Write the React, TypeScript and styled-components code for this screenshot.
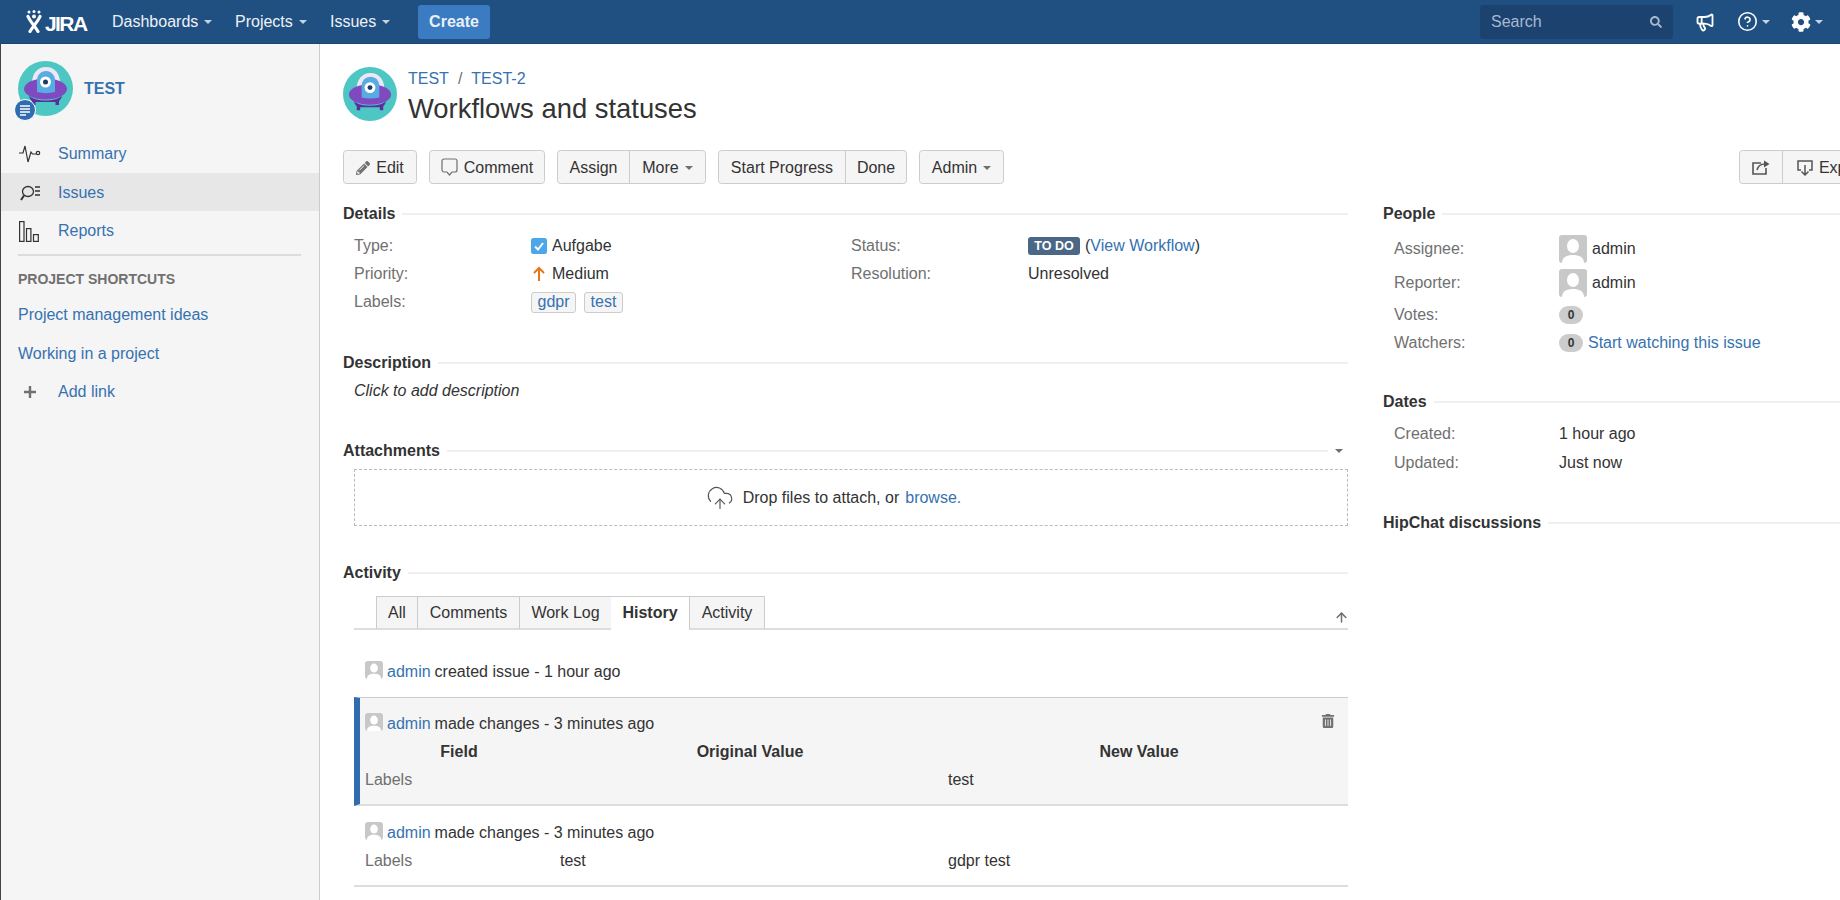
import React from "react";
import styled, { createGlobalStyle } from "styled-components";
import { FaPencilAlt, FaCog, FaSearch, FaTrashAlt } from "react-icons/fa";
import { Megaphone, CircleHelp, CloudUpload, ArrowUp } from "lucide-react";

const Global = createGlobalStyle`
  html, body { margin: 0; padding: 0; height: 100%; overflow: hidden; background: #fff; }
  body { font-family: "Liberation Sans", Arial, sans-serif; font-size: 16px; color: #333; }
  * { box-sizing: border-box; }
`;

const Page = styled.div`display: flex; flex-direction: column; height: 100vh; width: 1840px; overflow: hidden;`;
const TopBar = styled.header`
  flex: 0 0 44px; display: flex; align-items: center; background: #205081;
  border-bottom: 1px solid #1b4470; padding: 0 17px 0 26px; color: #fff;
`;
const LogoBox = styled.div`display: flex; align-items: center; width: 86px; height: 30px;`;
const LogoText = styled.span`font-size: 21px; font-weight: 700; letter-spacing: -1.6px; margin-left: 3px; color: #fff; line-height: 24px; padding-top: 4px;`;
const NavItem = styled.span<{ $w: number }>`
  display: flex; align-items: center; gap: 6px; width: ${p => p.$w}px; color: #eef2f7; font-size: 16px;
`;
const Caret = styled.i<{ $c?: string }>`
  display: inline-block; width: 0; height: 0; border-left: 4.5px solid transparent; border-right: 4.5px solid transparent;
  border-top: 4.5px solid ${p => p.$c || "#707070"}; flex: none;
`;
const EndCaret = styled(Caret)`margin-right: 5px;`;
const CreateBtn = styled.span`
  display: flex; align-items: center; justify-content: center; width: 72px; height: 34px; background: #3b7bc2;
  border-radius: 3px; color: #e8f0f8; font-weight: 700; font-size: 16px;
`;
const Spacer = styled.div`flex: 1;`;
const SearchBox = styled.div`
  width: 193px; height: 34px; background: #1c4270; border-radius: 3px; display: flex; align-items: center;
  justify-content: space-between; padding: 0 11px; color: #a6b9cf; font-size: 16px;
`;
const TopIcon = styled.span<{ $ml: number }>`display: flex; align-items: center; gap: 4px; margin-left: ${p => p.$ml}px; color: #fff;`;

const Body = styled.div`flex: 1; display: flex; min-height: 0;`;
const Side = styled.aside`
  flex: 0 0 320px; background: #f5f5f5; border-left: 1px solid #444; border-right: 1px solid #ccc; padding-top: 17px;
`;
const ProjectHead = styled.div`display: flex; align-items: center; height: 55px; margin: 0 0 18px 17px; gap: 11px; position: relative;`;
const ProjectName = styled.a`color: #3572b0; font-weight: 700; font-size: 16px;`;
const Badge = styled.span`
  position: absolute; left: -4px; bottom: -5px; width: 22px; height: 22px; border-radius: 50%; background: #2f6db0;
  border: 1.5px solid #fff; display: flex; align-items: center; justify-content: center;
`;
const SideRow = styled.div<{ $active?: boolean }>`
  height: 38.7px; display: flex; align-items: center; background: ${p => (p.$active ? "#e7e7e7" : "transparent")};
  color: #3572b0; padding: 1px 0 0 17px;
`;
const SideIcon = styled.span<{ $pl: number }>`width: 40px; padding-left: ${p => p.$pl}px; display: flex; align-items: center; color: #333;`;
const Divider = styled.div`height: 2px; background: #dcdcdc; margin: 4px 18px 9px 17px;`;
const ShortcutsTitle = styled.div`height: 28px; line-height: 28px; padding-left: 17px; margin-bottom: 2px; font-size: 14px; font-weight: 700; color: #707070;`;

const Main = styled.main`flex: 1; min-width: 0; padding: 23px 0 0 23px; overflow: hidden;`;
const IssueHead = styled.div`display: flex; height: 62px; gap: 11px;`;
const HeadText = styled.div`display: flex; flex-direction: column;`;
const Crumbs = styled.div`height: 22px; line-height: 24px; color: #3572b0; display: flex; gap: 9px;`;
const CrumbSep = styled.span`color: #707070;`;
const Title = styled.h1`margin: 0; font-size: 27.4px; font-weight: 400; line-height: 40px; color: #333;`;

const Toolbar = styled.div`display: flex; gap: 12px; width: 1537px; height: 34px; margin-top: 21px;`;
const Group = styled.div<{ $right?: boolean }>`
  display: flex; height: 34px; border: 1px solid #ccc; border-radius: 3.5px; background: #f5f5f5;
  margin-left: ${p => (p.$right ? "auto" : "0")};
`;
const Btn = styled.span<{ $w: number }>`
  width: ${p => p.$w}px; display: flex; align-items: center; justify-content: center; gap: 6px; color: #333; padding-top: 1px;
  & + & { border-left: 1px solid #ccc; }
`;

const Columns = styled.div`display: flex; gap: 35px;`;
const LeftCol = styled.div`flex: 0 0 1005px;`;
const RightCol = styled.div`flex: 1; min-width: 0;`;
const Heading = styled.div<{ $mt: number }>`
  display: flex; align-items: center; gap: 7px; height: 24px; margin-top: ${p => p.$mt}px;
  font-weight: 700; color: #333; padding-top: 1px;
`;
const HeadLine = styled.span`flex: 1; height: 2px; background: #efefef; margin-top: 1px;`;

const DetailsGrid = styled.div`display: grid; grid-template-columns: 177px 320px 177px 1fr; grid-auto-rows: 28px; margin: 7px 0 0 11px; align-items: center;`;
const Label = styled.span`color: #707070;`;
const Value = styled.span`display: flex; align-items: center; color: #333; gap: 5px;`;
const TagBox = styled.a`
  display: inline-flex; align-items: center; height: 21px; padding: 0 5.5px; margin-right: 3px; border: 1px solid #ccc;
  border-radius: 3px; background: #f5f5f5; color: #3572b0;
`;
const Lozenge = styled.span`
  display: inline-flex; align-items: center; justify-content: center; width: 52px; height: 18px; border-radius: 3px;
  background: #4a6785; color: #fff; font-size: 12.5px; font-weight: 700;
`;
const Link = styled.a`color: #3572b0;`;
const Italic = styled.div`height: 28px; line-height: 28px; margin: 3px 0 0 11px; font-style: italic; color: #333;`;
const DropZone = styled.div`
  height: 57px; margin: 7px 0 0 11px; border: 1px dashed #bbb; display: flex; align-items: center; justify-content: center;
  padding: 1px 35px 0 0; gap: 6px; color: #333;
`;
const CloudWrap = styled.span`display: flex; margin-right: 3px;`;
const Tabs = styled.div`
  display: flex; height: 34px; margin: 12px 0 0 11px; padding-left: 22px; border-bottom: 2px solid #ddd; position: relative;
`;
const Tab = styled.span<{ $active?: boolean; $w: number }>`
  width: ${p => p.$w}px; height: 34px; display: flex; align-items: center; justify-content: center;
  background: ${p => (p.$active ? "#fff" : "#f5f5f5")}; font-weight: ${p => (p.$active ? 700 : 400)};
  border: 1px solid #ccc; border-left-width: ${p => (p.$active ? 0 : 1)}px; border-bottom: ${p => (p.$active ? "2px solid #fff" : "2px solid #ddd")};
  & + & { margin-left: -1px; }
  color: #333;
`;
const TabArrow = styled.span`position: absolute; right: -1px; bottom: 3px; color: #707070; display: flex;`;

const Entries = styled.div`margin-left: 11px;`;
const Entry = styled.div<{ $hl?: boolean; $pt: number; $h: number }>`
  position: relative; height: ${p => p.$h}px; padding: ${p => p.$pt}px 0 0 ${p => (p.$hl ? 5 : 11)}px;
  background: ${p => (p.$hl ? "#f5f5f5" : "#fff")};
  border-top: ${p => (p.$hl ? "1px solid #ccc" : "none")};
  border-left: ${p => (p.$hl ? "6px solid #2f6db0" : "none")};
  border-bottom: ${p => (p.$hl ? "2px solid #ddd" : "none")};
`;
const EntryLine = styled.div`display: flex; align-items: center; height: 24px; gap: 4px; color: #333; padding-top: 1px;`;
const ChangeHead = styled.div`display: grid; grid-template-columns: 188px 394px 384px; height: 28px; align-items: center; text-align: center; font-weight: 700; margin-top: 2px; padding-top: 1px;`;
const ChangeRow = styled.div<{ $mt: number }>`display: grid; grid-template-columns: 195px 388px 1fr; height: 28px; align-items: center; margin-top: ${p => p.$mt}px; padding-top: 1px;`;
const Trash = styled.span`position: absolute; right: 13px; top: 16px; color: #707070; display: flex;`;
const EndLine = styled.div`height: 2px; background: #ddd; margin-top: 11px;`;

const PeopleRow = styled.div<{ $h: number }>`display: grid; grid-template-columns: 165px 1fr; height: ${p => p.$h}px; align-items: center; margin-left: 11px; padding-top: 1px;`;
const PeopleBlock = styled.div`margin-top: 6px;`;
const Count = styled.span`
  display: inline-flex; align-items: center; justify-content: center; width: 24px; height: 18px; border-radius: 9px;
  background: #ccc; color: #333; font-size: 12px; font-weight: 700;
`;
const AvatarBox = styled.span<{ $s: number; $lift: number }>`
  width: ${p => p.$s}px; height: ${p => p.$s}px; border-radius: 3px; background: #c8c8c8; overflow: hidden; display: inline-flex; flex: none;
  margin-top: ${p => -p.$lift}px;
`;

const Person = ({ s, lift = 0 }: { s: number; lift?: number }) => (
  <AvatarBox $s={s} $lift={lift}>
    <svg viewBox="0 0 28 28" width={s} height={s}>
      <ellipse cx="14" cy="11" rx="6" ry="7" fill="#fff" />
      <path d="M3 28c0-6 5-8 11-8s11 2 11 8z" fill="#fff" />
    </svg>
  </AvatarBox>
);

const Ufo = ({ s }: { s: number }) => (
  <svg viewBox="0 0 55 55" width={s} height={s}>
    <circle cx="27.5" cy="27.5" r="27.5" fill="#4cc7c4" />
    <path d="M14 22C14 12 20 6 28 6s14 6 14 16v10H14z" fill="#eee8f6" />
    <ellipse cx="27.5" cy="28" rx="21.500" ry="10.500" fill="#8049bf" />
    <path d="M11 35c5 3.500 10 4.500 16.500 4.500S39 38.500 44 35c-1 3-2 4-3 5v4h-3.500v-3h-20v3H14v-4c-1-1-2-2-3-5z" fill="#5b2d9e" />
    <path d="M19 31V19c0-5 4-9 9-9s9 4 9 9v12c-6 1.500-12 1.500-18 0z" fill="#57ade2" />
    <circle cx="27.5" cy="21" r="5.500" fill="#fff" />
    <circle cx="27.5" cy="21" r="2.500" fill="#1d3c6a" />
  </svg>
);

const LogoMark = () => (
  <svg viewBox="0 0 16 23" width="16" height="23" fill="none">
    <circle cx="3" cy="2" r="1.5" fill="#fff" />
    <circle cx="8" cy="1.5" r="1.5" fill="#fff" />
    <circle cx="13" cy="2" r="1.5" fill="#fff" />
    <path d="M2 6.5c2 5 5 7 10 15M14 6.5c-2 5-5 7-10 15" stroke="#fff" strokeWidth="3.2" strokeLinecap="round" />
    <circle cx="8" cy="6.5" r="2" fill="#fff" />
  </svg>
);

const Pulse = () => (
  <svg viewBox="0 0 22 20" width="22" height="20" fill="none" stroke="#333" strokeWidth="1.2">
    <path d="M0 9h4l2-7 3 16 3-10 1.500 2h4" />
    <circle cx="19" cy="9" r="1.700" />
  </svg>
);
const IssuesIcon = () => (
  <svg viewBox="0 0 21 16" width="21" height="16" fill="none" stroke="#333" strokeWidth="1.300">
    <ellipse cx="8" cy="6.500" rx="5.500" ry="5" />
    <path d="M4 10.500 1 15" strokeWidth="2" />
    <path d="M15 2h5M15 6h5M15 10h5" />
  </svg>
);
const BarsIcon = () => (
  <svg viewBox="0 0 20 21" width="20" height="21" fill="none" stroke="#333" strokeWidth="1.200">
    <rect x="0.600" y="0.600" width="4.400" height="19.800" />
    <rect x="7.500" y="7.600" width="4.400" height="12.800" />
    <rect x="14.500" y="13.600" width="4.800" height="6.800" />
  </svg>
);
const CommentIcon = () => (
  <svg viewBox="0 0 17 19" width="17" height="19" fill="none" stroke="#707070" strokeWidth="1.200">
    <path d="M3 1h11a2 2 0 0 1 2 2v9a2 2 0 0 1-2 2h-3l-2.500 3-2.500-3H3a2 2 0 0 1-2-2V3a2 2 0 0 1 2-2z" />
  </svg>
);
const ShareIcon = () => (
  <svg viewBox="0 0 18 15" width="18" height="15" fill="none" stroke="#555" strokeWidth="1.600">
    <path d="M9 3H1v11h13V8" />
    <path d="M5 10c1-4 4-6 8-6" />
    <path d="M12 0.500 17.500 4 12 7.500z" fill="#555" stroke="none" />
  </svg>
);
const ExportIcon = () => (
  <svg viewBox="0 0 16 16" width="16" height="16" fill="none" stroke="#555" strokeWidth="1.500">
    <path d="M4 10H1V1h14v9h-3" />
    <path d="M8 5v10M4.500 11.500 8 15l3.500-3.500" />
  </svg>
);
const CheckTile = () => (
  <svg viewBox="0 0 16 16" width="16" height="16">
    <rect width="16" height="16" rx="2.500" fill="#4ba6ea" />
    <path d="M4 8.500 7 11.500 12 5" fill="none" stroke="#fff" strokeWidth="2" />
  </svg>
);
const OrangeUp = () => (
  <svg viewBox="0 0 16 16" width="16" height="16" fill="none" stroke="#e8751a" strokeWidth="2">
    <path d="M8 15V2M3 7l5-5 5 5" />
  </svg>
);
const Lines = () => (
  <svg viewBox="0 0 12 12" width="12" height="12" stroke="#fff" strokeWidth="1.300">
    <path d="M1 2h10M1 5h10M1 8h10M1 11h6" />
  </svg>
);

export default function App() {
  return (
    <Page>
      <Global />
      <TopBar>
        <LogoBox><LogoMark /><LogoText>JIRA</LogoText></LogoBox>
        <NavItem $w={123}>Dashboards <Caret $c="#c5d2e2" /></NavItem>
        <NavItem $w={95}>Projects <Caret $c="#c5d2e2" /></NavItem>
        <NavItem $w={88}>Issues <Caret $c="#c5d2e2" /></NavItem>
        <CreateBtn>Create</CreateBtn>
        <Spacer />
        <SearchBox>Search <FaSearch size={12} color="#a6b9cf" /></SearchBox>
        <TopIcon $ml={22}><Megaphone size={20} strokeWidth={2.2} /></TopIcon>
        <TopIcon $ml={22}><CircleHelp size={21} strokeWidth={1.8} /><Caret $c="#c5d2e2" /></TopIcon>
        <TopIcon $ml={21}><FaCog size={20} /><Caret $c="#c5d2e2" /></TopIcon>
      </TopBar>
      <Body>
        <Side>
          <ProjectHead>
            <Ufo s={55} />
            <ProjectName>TEST</ProjectName>
            <Badge><Lines /></Badge>
          </ProjectHead>
          <SideRow><SideIcon $pl={1}><Pulse /></SideIcon>Summary</SideRow>
          <SideRow $active><SideIcon $pl={2}><IssuesIcon /></SideIcon>Issues</SideRow>
          <SideRow><SideIcon $pl={1}><BarsIcon /></SideIcon>Reports</SideRow>
          <Divider />
          <ShortcutsTitle>PROJECT SHORTCUTS</ShortcutsTitle>
          <SideRow>Project management ideas</SideRow>
          <SideRow>Working in a project</SideRow>
          <SideRow><SideIcon $pl={6}><svg viewBox="0 0 12 12" width="12" height="12" stroke="#707070" strokeWidth="2.400"><path d="M6 0v12M0 6h12" /></svg></SideIcon>Add link</SideRow>
        </Side>
        <Main>
          <IssueHead>
            <Ufo s={54} />
            <HeadText>
              <Crumbs><span>TEST</span><CrumbSep>/</CrumbSep><span>TEST-2</span></Crumbs>
              <Title>Workflows and statuses</Title>
            </HeadText>
          </IssueHead>
          <Toolbar>
            <Group><Btn $w={72}><FaPencilAlt size={14} color="#707070" />Edit</Btn></Group>
            <Group><Btn $w={114}><CommentIcon />Comment</Btn></Group>
            <Group><Btn $w={71}>Assign</Btn><Btn $w={76}>More <Caret /></Btn></Group>
            <Group><Btn $w={126}>Start Progress</Btn><Btn $w={61}>Done</Btn></Group>
            <Group><Btn $w={83}>Admin <Caret /></Btn></Group>
            <Group $right><Btn $w={42}><ShareIcon /></Btn><Btn $w={97}><ExportIcon />Export</Btn></Group>
          </Toolbar>
          <Columns>
            <LeftCol>
              <Heading $mt={17}>Details<HeadLine /></Heading>
              <DetailsGrid>
                <Label>Type:</Label>
                <Value><CheckTile />Aufgabe</Value>
                <Label>Status:</Label>
                <Value><Lozenge>TO DO</Lozenge><span>(<Link>View Workflow</Link>)</span></Value>
                <Label>Priority:</Label>
                <Value><OrangeUp />Medium</Value>
                <Label>Resolution:</Label>
                <Value>Unresolved</Value>
                <Label>Labels:</Label>
                <Value><TagBox>gdpr</TagBox><TagBox>test</TagBox></Value>
              </DetailsGrid>
              <Heading $mt={34}>Description<HeadLine /></Heading>
              <Italic>Click to add description</Italic>
              <Heading $mt={33}>Attachments<HeadLine /><EndCaret /></Heading>
              <DropZone><CloudWrap><CloudUpload size={28} strokeWidth={1} color="#555" /></CloudWrap><span>Drop files to attach, or</span><Link>browse.</Link></DropZone>
              <Heading $mt={34}>Activity<HeadLine /></Heading>
              <Tabs>
                <Tab $w={42}>All</Tab>
                <Tab $w={103}>Comments</Tab>
                <Tab $w={93}>Work Log</Tab>
                <Tab $w={79} $active>History</Tab>
                <Tab $w={76}>Activity</Tab>
                <TabArrow><ArrowUp size={15} strokeWidth={2.4} /></TabArrow>
              </Tabs>
              <Entries>
                <Entry $pt={29} $h={67}>
                  <EntryLine><Person s={18} lift={4} /><Link>admin</Link> created issue - 1 hour ago</EntryLine>
                </Entry>
                <Entry $hl $pt={13} $h={109}>
                  <EntryLine><Person s={18} lift={4} /><Link>admin</Link> made changes - 3 minutes ago</EntryLine>
                  <Trash><FaTrashAlt size={14} /></Trash>
                  <ChangeHead><span>Field</span><span>Original Value</span><span>New Value</span></ChangeHead>
                  <ChangeRow $mt={0}><Label>Labels</Label><span /><span>test</span></ChangeRow>
                </Entry>
                <Entry $pt={14} $h={68}>
                  <EntryLine><Person s={18} lift={4} /><Link>admin</Link> made changes - 3 minutes ago</EntryLine>
                  <ChangeRow $mt={2}><Label>Labels</Label><span>test</span><span>gdpr test</span></ChangeRow>
                </Entry>
                <EndLine />
              </Entries>
            </LeftCol>
            <RightCol>
              <Heading $mt={17}>People<HeadLine /></Heading>
              <PeopleBlock>
                <PeopleRow $h={34}><Label>Assignee:</Label><Value><Person s={28} />admin</Value></PeopleRow>
                <PeopleRow $h={34}><Label>Reporter:</Label><Value><Person s={28} />admin</Value></PeopleRow>
                <PeopleRow $h={30}><Label>Votes:</Label><Value><Count>0</Count></Value></PeopleRow>
                <PeopleRow $h={26}><Label>Watchers:</Label><Value><Count>0</Count><Link>Start watching this issue</Link></Value></PeopleRow>
              </PeopleBlock>
              <Heading $mt={34}>Dates<HeadLine /></Heading>
              <PeopleBlock>
                <PeopleRow $h={29}><Label>Created:</Label><Value>1 hour ago</Value></PeopleRow>
                <PeopleRow $h={29}><Label>Updated:</Label><Value>Just now</Value></PeopleRow>
              </PeopleBlock>
              <Heading $mt={33}>HipChat discussions<HeadLine /></Heading>
            </RightCol>
          </Columns>
        </Main>
      </Body>
    </Page>
  );
}
